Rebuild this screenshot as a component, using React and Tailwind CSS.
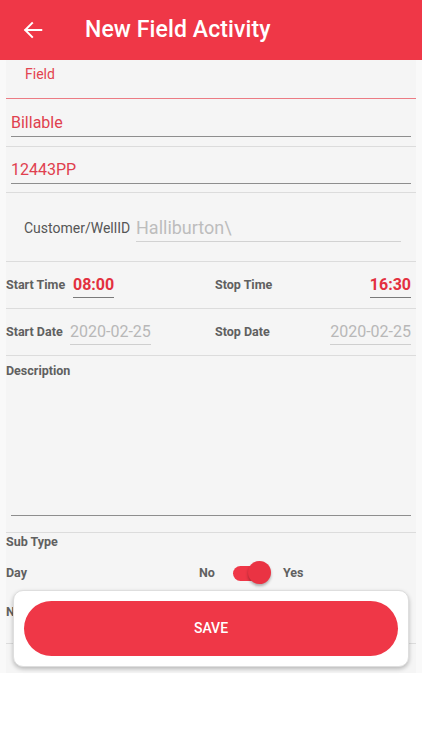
import React from "react";

export default function App() {
  return (
    <div
      className="relative w-[422px] h-[750px] bg-white overflow-hidden"
      style={{ fontFamily: "Roboto, 'Noto Sans', sans-serif" }}
    >
      {/* Header */}
      <div className="h-[60px] bg-[#ef3747] flex items-center">
        <svg
          className="ml-[22px]"
          width="22"
          height="22"
          viewBox="0 0 24 24"
          fill="none"
          stroke="white"
          strokeWidth="2.2"
          strokeLinecap="square"
        >
          <path d="M21 12H4" />
          <path d="M11 4.5L3.5 12L11 19.5" />
        </svg>
        <div className="ml-[41px] text-white text-[23px] font-medium tracking-[0.1px]">
          New Field Activity
        </div>
      </div>

      {/* Body */}
      <div className="h-[613px] bg-[#f9f9f9] px-[6px]">
        <div className="h-full bg-[#f5f5f5] flex flex-col">
          {/* Field */}
          <div className="h-[39px] border-b border-[#ec7b84] pl-[19px] pt-[5px]">
            <div className="text-[14px] leading-[18px] text-[#e3434f]">Field</div>
          </div>

          {/* Billable */}
          <div className="h-[48px] border-b-[1.5px] border-[#dcdcdc] px-[5px] pt-[12px]">
            <div className="h-[26px] border-b-[1.5px] border-[#8e8e8e] text-[16px] leading-[24px] text-[#e0404e]">
              Billable
            </div>
          </div>

          {/* 12443PP */}
          <div className="h-[46px] border-b-[1.5px] border-[#dcdcdc] px-[5px] pt-[11px]">
            <div className="h-[26px] border-b-[1.5px] border-[#8e8e8e] text-[16px] leading-[24px] text-[#e0404e]">
              12443PP
            </div>
          </div>

          {/* Customer / Well ID */}
          <div className="h-[69px] border-b-[1.5px] border-[#dcdcdc] pl-[18px] pt-[21px] flex">
            <div className="w-[112px] text-[14px] leading-[28px] text-[#555555]">
              Customer/WellID
            </div>
            <div className="w-[265px] h-[28px] border-b border-[#d2d2d2] text-[18px] leading-[27px] text-[#bdbdbd]">
              Halliburton\
            </div>
          </div>

          {/* Times */}
          <div className="h-[47px] border-b-[1.5px] border-[#dcdcdc] pt-[12px] flex pr-[5px]">
            <div className="w-[209px] flex">
              <div className="w-[67px] text-[12.5px] font-bold leading-[22px] text-[#606060]">
                Start Time
              </div>
              <div className="h-[24px] border-b-[1.5px] border-[#7a7a7a] text-[16px] font-bold leading-[22px] text-[#e3303f]">
                08:00
              </div>
            </div>
            <div className="flex-1 flex justify-between">
              <div className="text-[12.5px] font-bold leading-[22px] text-[#606060]">Stop Time</div>
              <div className="h-[24px] border-b-[1.5px] border-[#7a7a7a] text-[16px] font-bold leading-[22px] text-[#e3303f]">
                16:30
              </div>
            </div>
          </div>

          {/* Dates */}
          <div className="h-[47px] border-b-[1.5px] border-[#dcdcdc] pt-[12px] flex pr-[5px]">
            <div className="w-[209px] flex">
              <div className="w-[64px] text-[12.5px] font-bold leading-[22px] text-[#606060]">
                Start Date
              </div>
              <div className="h-[24px] border-b border-[#cfcfcf] text-[16px] leading-[22px] text-[#b8b8b8]">
                2020-02-25
              </div>
            </div>
            <div className="flex-1 flex justify-between">
              <div className="text-[12.5px] font-bold leading-[22px] text-[#606060]">Stop Date</div>
              <div className="h-[24px] border-b border-[#cfcfcf] text-[16px] leading-[22px] text-[#b8b8b8]">
                2020-02-25
              </div>
            </div>
          </div>

          {/* Description */}
          <div className="h-[177px] border-b-[1.5px] border-[#dcdcdc] pt-[7px] flex flex-col">
            <div className="text-[12.5px] font-bold leading-[16px] text-[#606060]">Description</div>
            <div className="mx-[5px] h-[137px] border-b-[1.5px] border-[#8e8e8e]" />
          </div>

          {/* Sub type */}
          <div className="flex flex-col">
            <div className="pt-[1px] text-[12.5px] font-bold leading-[16px] text-[#606060]">Sub Type</div>
            <div className="mt-[9px] h-[28px] flex items-center">
              <div className="w-[193px] text-[12.5px] font-bold text-[#606060]">Day</div>
              <div className="w-[34px] text-[12.5px] font-bold text-[#606060]">No</div>
              <div className="relative w-[40px] h-[24px] flex items-center">
                <div className="w-[34px] h-[15px] rounded-full bg-[#ef3747]" />
                <div className="absolute left-[15px] top-[0px] w-[23px] h-[23px] rounded-full bg-[#ea3343] shadow-[0_2px_3px_rgba(0,0,0,0.3)]" />
              </div>
              <div className="ml-[10px] text-[12.5px] font-bold text-[#606060]">Yes</div>
            </div>
            <div className="mt-[17px] h-[40px] border-b-[1.5px] border-[#dcdcdc] text-[12.5px] font-bold leading-[16px] text-[#606060]">
              Notes
            </div>
          </div>
        </div>
      </div>

      {/* Save card overlay */}
      <div className="absolute left-[13px] top-[590px] w-[396px] h-[77px] bg-white rounded-[10px] border border-[#dedede] shadow-[0_2px_4px_rgba(0,0,0,0.25)] px-[10px] pt-[10px]">
        <div className="h-[55px] rounded-full bg-[#ef3747] flex items-center justify-center text-white text-[14px] font-medium">
          SAVE
        </div>
      </div>
    </div>
  );
}
